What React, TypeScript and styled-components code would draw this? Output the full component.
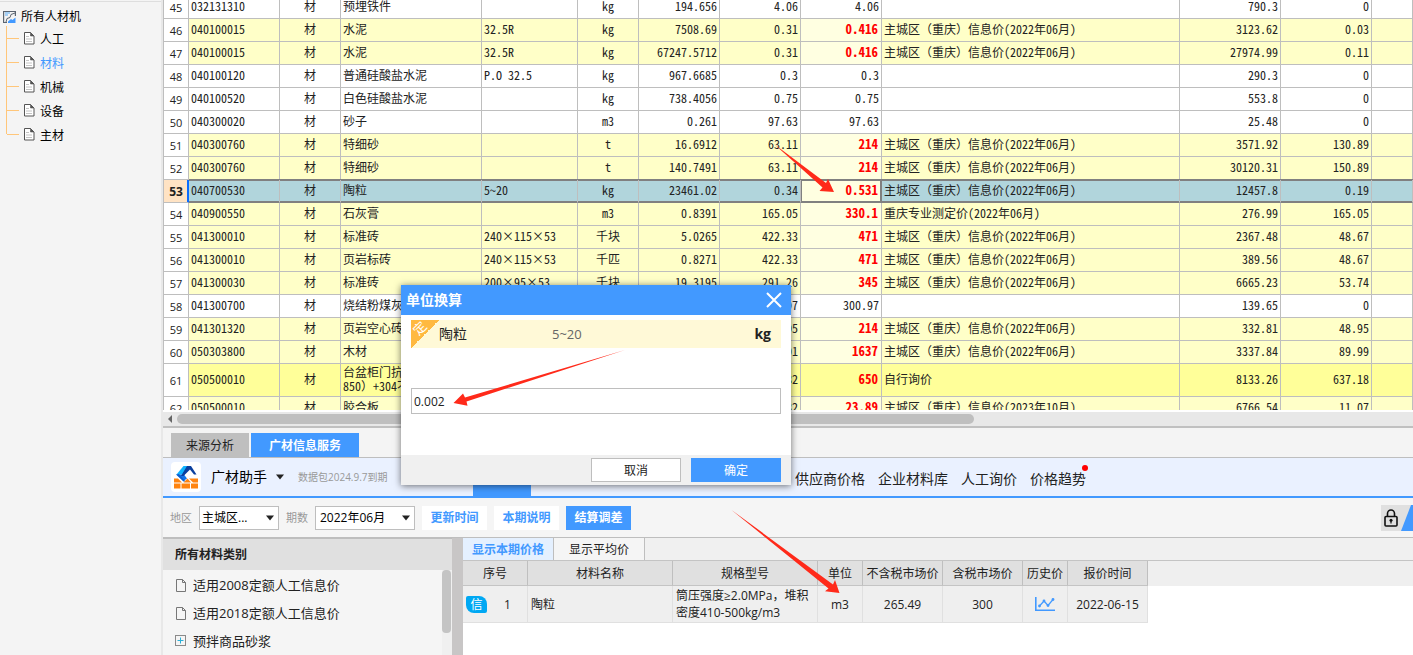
import React from 'react';
import styled, { createGlobalStyle, css } from 'styled-components';

const blue = '#4299ff';
const line = '#bebebe';

const GlobalStyle = createGlobalStyle`
  * { box-sizing: border-box; }
  body {
    margin: 0;
    overflow: hidden;
    background: #f5f5f5;
    color: #222;
    font: 12px/16px "Open Sans", "Noto Sans CJK SC", sans-serif;
  }
  button, input, select { font: inherit; color: inherit; }
`;

const Page = styled.div`
  position: relative;
  display: flex;
  height: 100vh;
  min-height: 560px;
  overflow: hidden;
`;

/* ---------- category tree ---------- */

const Sidebar = styled.aside`
  flex: none;
  width: 163px;
  padding-top: 1px;
  background: #f4f4f4;
  border-right: 2px solid #e8e8e8;
`;

const TreeRoot = styled.div`
  display: flex;
  align-items: center;
  gap: 5px;
  height: 25px;
  padding: 6px 0 0 3px;
  border-top: 1px solid #dedede;
  color: #000;
`;

const TreeList = styled.ul`
  margin: 0;
  padding: 0 0 0 6px;
  list-style: none;
`;

const TreeItem = styled.li<{ $active?: boolean }>`
  display: flex;
  align-items: center;
  height: 24px;
  padding-top: 4px;
  border-left: 1px solid #ffc67a;
  color: ${p => (p.$active ? blue : '#000')};
  &::before {
    content: '';
    width: 12px;
    height: 1px;
    margin-right: 5px;
    margin-top: -4px;
    background: #ffc67a;
  }
  svg { margin: 0 5px 4px 0; }
  &:last-child {
    border-left: 0;
    background: linear-gradient(#ffc67a, #ffc67a) 0 0 / 1px 12px no-repeat;
    padding-left: 1px;
  }
`;

/* ---------- main grid ---------- */

const Main = styled.main`
  flex: 1;
  min-width: 0;
  display: flex;
  flex-direction: column;
`;

const GridPane = styled.div`
  flex: 1 1 0;
  min-height: 0;
  overflow: hidden;
  border-left: 1px solid ${line};
  background: #fff;
`;

const GridTable = styled.table`
  width: 100%;
  margin-top: -4px;
  table-layout: fixed;
  border-collapse: separate;
  border-spacing: 0;
  font-family: "Noto Sans CJK SC", sans-serif;
  font-feature-settings: "hwid";
  line-height: 14px;
`;

const FullWidth = styled.span`
  font-feature-settings: normal;
`;

type Tone = 'plain' | 'soft' | 'strong' | 'current';
const tones: Record<Tone, string> = {
  plain: '#fff',
  soft: '#ffffc8',
  strong: '#ffff99',
  current: '#b1d5dc',
};

const GridRow = styled.tr<{ $tone: Tone; $tall?: boolean }>`
  height: ${p => (p.$tall ? 33 : 23)}px;
  background: ${p => tones[p.$tone]};
  ${p => p.$tone === 'current' && css`
    td {
      box-shadow: 0 -1px 0 #808080, inset 0 1px 0 #808080, inset 0 -1px 0 #808080;
      border-bottom-color: #808080;
    }
  `}
`;

const Cell = styled.td<{ $align?: 'left' | 'center' | 'right' }>`
  padding: 0 2px 2px;
  border-right: 1px solid ${line};
  border-bottom: 1px solid ${line};
  text-align: ${p => p.$align || 'left'};
  white-space: nowrap;
  overflow: hidden;
`;

const MarketCell = styled(Cell)<{ $tone: Tone; $hot: boolean }>`
  ${p => p.$hot && css`
    padding-right: 3px;
    color: #f00;
    font-weight: 700;
    font-size: 13px;
  `}
  ${p => (p.$tone === 'soft' || p.$tone === 'current') && css`background: #ffffe1;`}
  ${p => p.$tone === 'current' && css`
    && {
      border-right-color: #808080;
      box-shadow: 0 -1px 0 #808080, inset 1px 0 0 #808080, inset 0 1px 0 #808080,
        inset 0 -1px 0 #808080, inset -1px 0 0 #808080;
    }
  `}
`;

const RowHead = styled.th<{ $current: boolean }>`
  padding: 2px 0 0;
  border-right: 1px solid ${line};
  border-bottom: 1px solid ${line};
  background: #fff;
  font: 400 11px/14px "Open Sans", sans-serif;
  text-align: center;
  ${p => p.$current && css`
    background: #ffe3c4;
    font-size: 12px;
    font-weight: 700;
    border-right-color: #0a6cff;
    box-shadow: inset -1px 0 0 #0a6cff;
  `}
`;

const ScrollBar = styled.div`
  flex: none;
  display: flex;
  align-items: center;
  height: 18px;
  padding-left: 5px;
  gap: 5px;
  background: #e8e8e8;
  border-top: 2px solid #fff;
  border-bottom: 2px solid #c0c0c0;
`;

const ScrollThumb = styled.div`
  width: 64%;
  height: 10px;
  border-radius: 5px;
  background: #bfbfbf;
`;

/* ---------- service panel ---------- */

const TabStrip = styled.div`
  flex: none;
  display: flex;
  gap: 2px;
  height: 30px;
  padding: 5px 8px 0;
  border-bottom: 1px solid ${line};
  background: #f4f4f4;
`;

const PanelTab = styled.button<{ $active?: boolean }>`
  height: 24px;
  padding: 2px 15px 0;
  border: 0;
  background: #bfbfbf;
  ${p => p.$active && css`
    padding: 2px 18px 0;
    background: ${blue};
    color: #fff;
    font-weight: 700;
  `}
`;

const ServiceBar = styled.header`
  flex: none;
  display: flex;
  align-items: center;
  height: 40px;
  padding-left: 8px;
  border-bottom: 2px solid ${blue};
  background: #eaf1ff;
`;

const Logo = styled.span`
  display: grid;
  place-items: center;
  width: 30px;
  height: 30px;
  margin-right: 10px;
  border-radius: 4px;
  background: #fff;
`;

const Brand = styled.button`
  display: flex;
  align-items: center;
  gap: 9px;
  padding: 0;
  border: 0;
  background: none;
  color: #000;
  font-size: 14px;
`;

const Expiry = styled.small`
  width: 189px;
  padding-left: 14px;
  font-size: 10px;
  color: #999;
`;

const Nav = styled.nav`
  display: flex;
  align-items: center;
  align-self: stretch;
  gap: 13px;
  font-size: 14px;
`;

const NavHome = styled.a`
  align-self: stretch;
  width: 58px;
  margin-right: 251px;
  background: ${blue};
`;

const NavLink = styled.a<{ $dot?: boolean }>`
  position: relative;
  padding-top: 3px;
  color: #222;
  text-decoration: none;
  white-space: nowrap;
  ${p => p.$dot && css`
    &::after {
      content: '';
      position: absolute;
      top: -3px;
      right: -2px;
      width: 6px;
      height: 6px;
      border-radius: 50%;
      background: #f00;
    }
  `}
`;

const Toolbar = styled.div`
  flex: none;
  display: flex;
  align-items: center;
  gap: 7px;
  height: 40px;
  padding-left: 7px;
  border-bottom: 1px solid ${line};
`;

const Field = styled.label`
  display: flex;
  align-items: center;
  gap: 7px;
  color: #999;
  font-size: 11px;
`;

const SelectBox = styled.span<{ $wide?: boolean }>`
  position: relative;
  width: ${p => (p.$wide ? 100 : 80)}px;
  height: 24px;
  select {
    width: 100%;
    height: 24px;
    padding: 0 20px 0 ${p => (p.$wide ? 4 : 2)}px;
    border: 1px solid ${line};
    border-radius: 0;
    background: #fff;
    color: #000;
    font-size: 12px;
    appearance: none;
  }
  svg { position: absolute; right: 5px; top: 9px; pointer-events: none; }
`;

const ToolButton = styled.button<{ $primary?: boolean }>`
  width: 65px;
  height: 24px;
  padding: 0;
  border: 0;
  font-weight: 700;
  color: ${p => (p.$primary ? '#fff' : blue)};
  background: ${p => (p.$primary ? blue : '#fff')};
`;

const LockButton = styled.button`
  display: flex;
  align-items: center;
  width: 32px;
  height: 26px;
  margin-left: auto;
  padding: 0;
  border: 0;
  background: #e0e0e0;
`;

const Lower = styled.section`
  flex: none;
  display: flex;
  height: 117px;
`;

const Categories = styled.div`
  flex: none;
  width: 300px;
  border-right: 11px solid #c8c6c6;
  background: #f5f5f5;
`;

const CategoriesTitle = styled.h2`
  height: 32px;
  margin: 0;
  padding-left: 12px;
  border-top: 1px solid ${line};
  background: #e0e0e0;
  font-size: 12px;
  line-height: 31px;
`;

const CategoriesBody = styled.div`
  display: flex;
  justify-content: space-between;
  height: 85px;
`;

const CategoryList = styled.ul`
  margin: 0;
  padding: 1px 0 0 12px;
  list-style: none;
  font-size: 13px;
  li { display: flex; align-items: center; gap: 6px; height: 28px; }
`;

const VTrack = styled.div`
  width: 10px;
  background: #f0f0f0;
  &::before {
    content: '';
    display: block;
    width: 9px;
    height: 63px;
    border-radius: 4px;
    background: #c4c4c4;
  }
`;

const Prices = styled.div`
  flex: 1;
  min-width: 0;
  background: #fff;
`;

const PriceTabs = styled.div`
  display: flex;
  height: 23px;
  border-bottom: 1px solid #c4c4c4;
  background: #f0f0f0;
`;

const PriceTab = styled.button<{ $active?: boolean }>`
  width: 91px;
  padding: 2px 0 0;
  border: 0;
  border-right: 1px solid ${line};
  background: ${p => (p.$active ? '#e4f0ff' : '#f5f5f5')};
  color: ${p => (p.$active ? blue : '#222')};
  font-weight: ${p => (p.$active ? 700 : 400)};
`;

const PriceScroll = styled.div`
  background: linear-gradient(#efefef, #efefef) 0 0 / 100% 25px no-repeat;
`;

const PriceTable = styled.table`
  width: 685px;
  table-layout: fixed;
  border-collapse: separate;
  border-spacing: 0;
  th {
    height: 25px;
    padding: 2px 0 0;
    border-right: 1px solid #bfbfbf;
    border-bottom: 1px solid #c4c4c4;
    background: #e0e0e0;
    font-weight: 400;
    white-space: nowrap;
  }
  td {
    height: 37px;
    padding: 0 3px;
    border-right: 1px solid #e0e0e0;
    border-bottom: 1px solid #e0e0e0;
    background: #efefef;
    line-height: 17px;
    text-align: center;
  }
  td.text { text-align: left; }
  td svg { display: block; margin: 0 auto; }
`;

const Index = styled.div`
  display: flex;
  align-items: center;
  gap: 17px;
`;

const InfoBadge = styled.span`
  width: 21px;
  height: 17px;
  border-radius: 2px 8px 2px 8px;
  background: #00a8f3;
  color: #fff;
`;

/* ---------- dialog ---------- */

const Dialog = styled.form`
  position: absolute;
  left: 401px;
  top: 285px;
  width: 390px;
  background: #fff;
  box-shadow: 0 1px 7px rgba(0, 0, 0, 0.55);
`;

const DialogHead = styled.div`
  display: flex;
  align-items: center;
  justify-content: space-between;
  height: 30px;
  padding: 0 9px 0 5px;
  background: ${blue};
  color: #fff;
  font-size: 14px;
  font-weight: 700;
`;

const CloseButton = styled.button`
  display: flex;
  padding: 0;
  border: 0;
  background: none;
`;

const DialogBody = styled.div`
  height: 140px;
  padding: 5px 10px 0;
`;

const Material = styled.div`
  display: grid;
  grid-template-columns: 28px 113px 1fr auto;
  align-items: center;
  height: 28px;
  padding-right: 10px;
  background: #fff9d7;
  font-size: 14px;
  em { font-style: normal; font-size: 13px; color: #666; }
`;

const Ribbon = styled.span`
  width: 28px;
  height: 28px;
  background: linear-gradient(135deg, #ffb940 50%, transparent 50%);
  color: #fff;
  font-size: 13px;
  line-height: 17px;
  b {
    display: block;
    width: 18px;
    font-weight: 400;
    text-align: center;
    transform: rotate(-45deg);
  }
`;

const FactorInput = styled.input`
  width: 100%;
  height: 26px;
  margin-top: 40px;
  padding: 0 2px;
  border: 1px solid ${line};
  background: #fff;
`;

const DialogFoot = styled.div`
  display: flex;
  justify-content: flex-end;
  align-items: center;
  gap: 10px;
  height: 30px;
  padding: 0 10px;
  background: #f0f0f0;
`;

const DialogButton = styled.button<{ $primary?: boolean }>`
  width: 90px;
  height: 24px;
  padding: 2px 0 0;
  border: 1px solid ${p => (p.$primary ? blue : line)};
  background: ${p => (p.$primary ? blue : '#fff')};
  color: ${p => (p.$primary ? '#fff' : '#222')};
`;

const Arrows = styled.svg`
  position: absolute;
  left: 0;
  top: 0;
  pointer-events: none;
`;

/* ---------- icons ---------- */

const RootIcon = () => (
  <svg width="13" height="14" viewBox="0 0 13 14" fill="none">
    <path d="M12.400 6V1.500H.6V12.500H4" stroke="#5b6470" strokeWidth="1.200" />
    <path d="M2 3h5M2 5h3" stroke="#8cc4f5" strokeWidth="1.400" />
    <path d="M12 3L8 4.500 7 7.500 4 8.500 3 12" stroke="#5b6470" />
    <path d="M5 13V11.500L8 9l1.500 1L12.500 7.500V13z" fill={blue} />
  </svg>
);

const DocIcon = () => (
  <svg width="11" height="13" viewBox="0 0 11 13" fill="none">
    <path d="M.5.5H6.500L10 4V12H.5z" fill="#fff" stroke="#555" />
    <path d="M6.500.5V4H10z" fill="#555" stroke="#555" strokeWidth=".6" />
    <path d="M2 4.500h3M2 7h6M2 9.500h6" stroke="#c4c4c4" />
  </svg>
);

const FileIcon = () => (
  <svg width="12" height="13" viewBox="0 0 12 13" fill="none">
    <path d="M1.500.5H7.500L10.500 3.500V12.500H1.500zM7.500.5V3.500H10.500" stroke="#777" />
  </svg>
);

const PlusBoxIcon = () => (
  <svg width="12" height="12" viewBox="0 0 12 12" fill="none">
    <rect x=".5" y=".5" width="10" height="10" stroke="#8a8a8a" />
    <path d="M5.500 2.500v6M2.500 5.500h6" stroke="#2ab0d8" />
  </svg>
);

const Caret = () => (
  <svg width="8" height="6" viewBox="0 0 8 6"><path d="M0 .5h8L4 5.500z" fill="#222" /></svg>
);

const LogoIcon = () => (
  <svg width="24" height="24" viewBox="0 0 24 24">
    <path d="M9.500 1H17L10 9.500H2.500z" fill="#0fb3ff" />
    <path d="M2.500 9.500H10L13 13.500 9.500 16z" fill="#1273ea" />
    <path d="M2 9.500l7.500 7h2L5 9z" fill="#0b5fd0" />
    <path d="M13 1h4l5.500 8.500h-2.500L16 4.500 9.500 11H7z" fill="#0a3f9e" />
    <path d="M0 13.500h4l4 4H0zM0 18.500h6.500V23.500H0zM7.500 18.500h8.500V23.500H7.500zM17 18.500h7V23.500H17zM9.500 17.500l4-4 3.500 4zM15 13.500h9v4h-5z" fill="#ff8410" />
  </svg>
);

const LockIcon = () => (
  <svg width="32" height="26" viewBox="0 0 32 26" fill="none">
    <path d="M30 0h2V26H20z" fill={blue} />
    <rect x="4" y="11.500" width="12" height="9.500" rx="1" stroke="#111" strokeWidth="1.600" />
    <path d="M6.500 11V8.500a3.500 3.500 0 0 1 7 0V11" stroke="#111" strokeWidth="1.600" />
    <circle cx="10" cy="15.300" r="1.500" fill="#111" />
    <path d="M10 15v3.500" stroke="#111" strokeWidth="1.200" />
  </svg>
);

const TrendIcon = () => (
  <svg width="20" height="14" viewBox="0 0 20 14" fill="none" stroke={blue}>
    <path d="M.8 0V13.200H20" strokeWidth="1.600" />
    <path d="M4.500 9L9 4l4 4.500L18 2.500" strokeWidth="1.200" />
    <g fill={blue} stroke="none">
      <circle cx="4.500" cy="9" r="1.400" /><circle cx="9" cy="4" r="1.400" />
      <circle cx="13" cy="8.500" r="1.400" /><circle cx="18" cy="2.500" r="1.400" />
    </g>
  </svg>
);

/* ---------- data ---------- */

interface Item {
  no: number; code: string; name: string; spec?: string; unit?: string; qty?: string;
  price: string; market: string; source?: string; total: string; diff: string; tone: Tone;
}

const info = '主城区（重庆）信息价(2022年06月)';

const items: Item[] = [
  { no: 45, code: '032131310', name: '预埋铁件', unit: 'kg', qty: '194.656', price: '4.06', market: '4.06', total: '790.3', diff: '0', tone: 'plain' },
  { no: 46, code: '040100015', name: '水泥', spec: '32.5R', unit: 'kg', qty: '7508.69', price: '0.31', market: '0.416', source: info, total: '3123.62', diff: '0.03', tone: 'soft' },
  { no: 47, code: '040100015', name: '水泥', spec: '32.5R', unit: 'kg', qty: '67247.5712', price: '0.31', market: '0.416', source: info, total: '27974.99', diff: '0.11', tone: 'soft' },
  { no: 48, code: '040100120', name: '普通硅酸盐水泥', spec: 'P.O 32.5', unit: 'kg', qty: '967.6685', price: '0.3', market: '0.3', total: '290.3', diff: '0', tone: 'plain' },
  { no: 49, code: '040100520', name: '白色硅酸盐水泥', unit: 'kg', qty: '738.4056', price: '0.75', market: '0.75', total: '553.8', diff: '0', tone: 'plain' },
  { no: 50, code: '040300020', name: '砂子', unit: 'm3', qty: '0.261', price: '97.63', market: '97.63', total: '25.48', diff: '0', tone: 'plain' },
  { no: 51, code: '040300760', name: '特细砂', unit: 't', qty: '16.6912', price: '63.11', market: '214', source: info, total: '3571.92', diff: '130.89', tone: 'soft' },
  { no: 52, code: '040300760', name: '特细砂', unit: 't', qty: '140.7491', price: '63.11', market: '214', source: info, total: '30120.31', diff: '150.89', tone: 'soft' },
  { no: 53, code: '040700530', name: '陶粒', spec: '5~20', unit: 'kg', qty: '23461.02', price: '0.34', market: '0.531', source: info, total: '12457.8', diff: '0.19', tone: 'current' },
  { no: 54, code: '040900550', name: '石灰膏', unit: 'm3', qty: '0.8391', price: '165.05', market: '330.1', source: '重庆专业测定价(2022年06月)', total: '276.99', diff: '165.05', tone: 'soft' },
  { no: 55, code: '041300010', name: '标准砖', spec: '240×115×53', unit: '千块', qty: '5.0265', price: '422.33', market: '471', source: info, total: '2367.48', diff: '48.67', tone: 'soft' },
  { no: 56, code: '041300010', name: '页岩标砖', spec: '240×115×53', unit: '千匹', qty: '0.8271', price: '422.33', market: '471', source: info, total: '389.56', diff: '48.67', tone: 'soft' },
  { no: 57, code: '041300030', name: '标准砖', spec: '200×95×53', unit: '千块', qty: '19.3195', price: '291.26', market: '345', source: info, total: '6665.23', diff: '53.74', tone: 'soft' },
  { no: 58, code: '041300700', name: '烧结粉煤灰', price: '300.97', market: '300.97', total: '139.65', diff: '0', tone: 'plain' },
  { no: 59, code: '041301320', name: '页岩空心砖', price: '165.05', market: '214', source: info, total: '332.81', diff: '48.95', tone: 'soft' },
  { no: 60, code: '050303800', name: '木材', price: '1547.01', market: '1637', source: info, total: '3337.84', diff: '89.99', tone: 'soft' },
  { no: 61, code: '050500010', name: '台盆柜门抗\n850）+304不', price: '12.82', market: '650', source: '自行询价', total: '8133.26', diff: '637.18', tone: 'strong' },
  { no: 62, code: '050500010', name: '胶合板', price: '12.82', market: '23.89', source: '主城区（重庆）信息价(2023年10月)', total: '6766.54', diff: '11.07', tone: 'soft' },
];

const columnWidths = [25, 91, 61, 141, 96, 61, 81, 81, 81, 298, 101, 91];
const priceColumns: [string, number][] = [
  ['序号', 65], ['材料名称', 145], ['规格型号', 145], ['单位', 45],
  ['不含税市场价', 80], ['含税市场价', 80], ['历史价', 45], ['报价时间', 80],
];

/* Latin text takes half-width glyphs in the grid; full-width brackets keep their own cell. */
const GridText = ({ text = '' }: { text?: string }) => (
  <>
    {text.split(/([（）]|\n)/).map((part, i) => {
      if (part === '\n') return <br key={i} />;
      return /[（）]/.test(part) ? <FullWidth key={i}>{part}</FullWidth> : part;
    })}
  </>
);

const MaterialRow = ({ item }: { item: Item }) => (
  <GridRow $tone={item.tone} $tall={item.name.includes('\n')}>
    <RowHead scope="row" $current={item.tone === 'current'}>{item.no}</RowHead>
    <Cell>{item.code}</Cell>
    <Cell $align="center">材</Cell>
    <Cell><GridText text={item.name} /></Cell>
    <Cell>{item.spec}</Cell>
    <Cell $align="center">{item.unit}</Cell>
    <Cell $align="right">{item.qty}</Cell>
    <Cell $align="right">{item.price}</Cell>
    <MarketCell $align="right" $tone={item.tone} $hot={!!item.source}>{item.market}</MarketCell>
    <Cell><GridText text={item.source} /></Cell>
    <Cell $align="right">{item.total}</Cell>
    <Cell $align="right">{item.diff}</Cell>
    <Cell />
  </GridRow>
);

export default function App() {
  return (
    <Page>
      <GlobalStyle />
      <Sidebar>
        <TreeRoot><RootIcon />所有人材机</TreeRoot>
        <TreeList>
          {['人工', '材料', '机械', '设备', '主材'].map(n => (
            <TreeItem key={n} $active={n === '材料'}><DocIcon />{n}</TreeItem>
          ))}
        </TreeList>
      </Sidebar>

      <Main>
        <GridPane>
          <GridTable>
            <colgroup>
              {columnWidths.map((w, i) => <col key={i} width={w} />)}
              <col />
            </colgroup>
            <tbody>{items.map(i => <MaterialRow key={i.no} item={i} />)}</tbody>
          </GridTable>
        </GridPane>
        <ScrollBar>
          <svg width="4" height="8" viewBox="0 0 4 8"><path d="M4 0v8L0 4z" fill="#666" /></svg>
          <ScrollThumb />
        </ScrollBar>

        <TabStrip>
          <PanelTab type="button">来源分析</PanelTab>
          <PanelTab type="button" $active>广材信息服务</PanelTab>
        </TabStrip>

        <ServiceBar>
          <Logo><LogoIcon /></Logo>
          <Brand type="button">广材助手<Caret /></Brand>
          <Expiry>数据包2024.9.7到期</Expiry>
          <Nav>
            <NavHome href="#" />
            <NavLink href="#">供应商价格</NavLink>
            <NavLink href="#">企业材料库</NavLink>
            <NavLink href="#">人工询价</NavLink>
            <NavLink href="#" $dot>价格趋势</NavLink>
          </Nav>
        </ServiceBar>

        <Toolbar>
          <Field>地区
            <SelectBox><select defaultValue="a"><option value="a">主城区...</option></select><Caret /></SelectBox>
          </Field>
          <Field>期数
            <SelectBox $wide><select defaultValue="a"><option value="a">2022年06月</option></select><Caret /></SelectBox>
          </Field>
          <ToolButton type="button">更新时间</ToolButton>
          <ToolButton type="button">本期说明</ToolButton>
          <ToolButton type="button" $primary>结算调差</ToolButton>
          <LockButton type="button"><LockIcon /></LockButton>
        </Toolbar>

        <Lower>
          <Categories>
            <CategoriesTitle>所有材料类别</CategoriesTitle>
            <CategoriesBody>
              <CategoryList>
                <li><FileIcon />适用2008定额人工信息价</li>
                <li><FileIcon />适用2018定额人工信息价</li>
                <li><PlusBoxIcon />预拌商品砂浆</li>
              </CategoryList>
              <VTrack />
            </CategoriesBody>
          </Categories>
          <Prices>
            <PriceTabs>
              <PriceTab type="button" $active>显示本期价格</PriceTab>
              <PriceTab type="button">显示平均价</PriceTab>
            </PriceTabs>
            <PriceScroll>
              <PriceTable>
                <colgroup>{priceColumns.map(([n, w]) => <col key={n} width={w} />)}</colgroup>
                <thead><tr>{priceColumns.map(([n]) => <th key={n} scope="col">{n}</th>)}</tr></thead>
                <tbody>
                  <tr>
                    <td><Index><InfoBadge>信</InfoBadge>1</Index></td>
                    <td className="text">陶粒</td>
                    <td className="text">筒压强度≥2.0MPa，堆积<br />密度410-500kg/m3</td>
                    <td>m3</td>
                    <td>265.49</td>
                    <td>300</td>
                    <td><TrendIcon /></td>
                    <td>2022-06-15</td>
                  </tr>
                </tbody>
              </PriceTable>
            </PriceScroll>
          </Prices>
        </Lower>
      </Main>

      <Dialog onSubmit={e => e.preventDefault()}>
        <DialogHead>
          单位换算
          <CloseButton type="button" aria-label="关闭">
            <svg width="16" height="16" viewBox="0 0 16 16"><path d="M1 1l14 14M15 1L1 15" stroke="#fff" strokeWidth="2" /></svg>
          </CloseButton>
        </DialogHead>
        <DialogBody>
          <Material>
            <Ribbon><b>定</b></Ribbon>
            <span>陶粒</span>
            <em>5~20</em>
            <strong>kg</strong>
          </Material>
          <FactorInput aria-label="单位换算" defaultValue="0.002" />
        </DialogBody>
        <DialogFoot>
          <DialogButton type="button">取消</DialogButton>
          <DialogButton type="submit" $primary>确定</DialogButton>
        </DialogFoot>
      </Dialog>

      <Arrows width="1413" height="655" viewBox="0 0 1413 655" fill="#ff2a1a">
        <path d="M774 144L826 183 828 179 834 192 819.500 191 822.500 187.500z" />
        <path d="M625 350L465 397.500 463 393.500 453.500 403 467.500 405.700 466.500 401.500z" />
        <path d="M731.500 510L833 584.500 835 580 839.500 593 825 591.300 828.500 588.500z" />
      </Arrows>
    </Page>
  );
}
